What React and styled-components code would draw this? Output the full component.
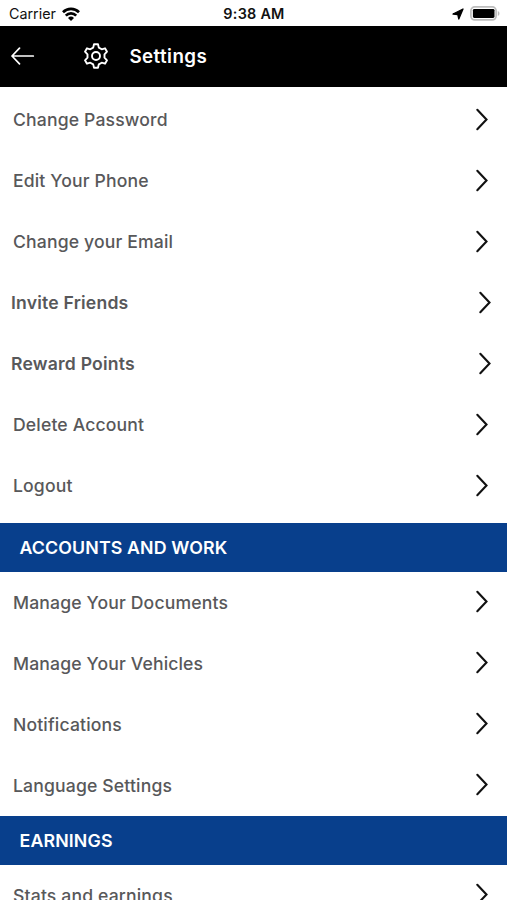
import React from 'react';
import styled, { createGlobalStyle } from 'styled-components';

const colors = {
  text: '#58585a',
  section: '#083f8c',
};

const GlobalStyle = createGlobalStyle`
  * {
    box-sizing: border-box;
  }

  body {
    margin: 0;
    overflow: hidden;
    background: white;
    font-family: Inter, "Liberation Sans", sans-serif;
  }
`;

const Screen = styled.div`
  display: flex;
  flex-direction: column;
  height: 900px;
  overflow: hidden;
`;

const StatusBar = styled.div`
  display: grid;
  grid-template-columns: 1fr auto 1fr;
  align-items: center;
  flex: none;
  height: 25.6px;
  padding: 1.6px 7px 0 9px;
  color: #111;
`;

const Carrier = styled.div`
  display: flex;
  align-items: center;
  gap: 6px;
  font-size: 14.3px;
`;

const Clock = styled.div`
  margin-right: 1px;
  font-size: 14.4px;
  font-weight: 600;
  letter-spacing: 0.25px;
`;

const StatusIcons = styled.div`
  display: flex;
  align-items: center;
  justify-content: flex-end;
  gap: 6px;
`;

const Header = styled.header`
  display: flex;
  align-items: center;
  flex: none;
  height: 61px;
  padding-left: 11px;
  background: black;
  color: white;
`;

const Title = styled.h1`
  margin: 0 0 0 20.5px;
  font-size: 18.8px;
  font-weight: 580;
  letter-spacing: 0.4px;
`;

const GearIcon = styled.svg`
  margin-left: 48px;
`;

const List = styled.div`
  flex: none;
  padding: ${props => (props.$first ? '2.4px 0 6.4px' : '0')};
`;

const Row = styled.div`
  display: flex;
  align-items: center;
  justify-content: space-between;
  height: 61.05px;
  padding: ${props => (props.$wide ? '0 16.5px 0 11px' : '0 19px 0 13px')};
  color: ${colors.text};
`;

const Label = styled.span`
  font-size: 17.6px;
  font-weight: ${props => (props.$wide ? 560 : 500)};
  letter-spacing: ${props => (props.$wide ? '0.2px' : '0.15px')};
  white-space: nowrap;
`;

const SectionTitle = styled.h2`
  display: flex;
  align-items: center;
  flex: none;
  height: 49px;
  margin: 0;
  padding-left: 19.5px;
  background: ${colors.section};
  color: white;
  font-size: 17.8px;
  font-weight: 560;
  letter-spacing: 0.12px;
`;

const account = [
  { label: 'Change Password' },
  { label: 'Edit Your Phone' },
  { label: 'Change your Email' },
  { label: 'Invite Friends', wide: true },
  { label: 'Reward Points', wide: true },
  { label: 'Delete Account' },
  { label: 'Logout' },
];

const work = [
  { label: 'Manage Your Documents' },
  { label: 'Manage Your Vehicles' },
  { label: 'Notifications' },
  { label: 'Language Settings' },
];

const earnings = [{ label: 'Stats and earnings' }];

const Wifi = () => (
  <svg width="18" height="14" viewBox="0 0 18 14" fill="none" stroke="black" strokeWidth="2.7">
    <path d="M1 5.2a11.4 11.4 0 0 1 16 0" />
    <path d="M3.8 8.6a7.3 7.3 0 0 1 10.4 0" />
    <path d="M9 13.9 6 10.9a4.3 4.3 0 0 1 6 0z" fill="black" stroke="none" />
  </svg>
);

const Location = () => (
  <svg width="12" height="12" viewBox="0 0 12 12">
    <path d="M11 1 6.8 11 5.8 6.7 1 6z" fill="black" stroke="black" strokeWidth="1.3" strokeLinejoin="round" />
  </svg>
);

const Battery = () => (
  <svg width="30" height="15" viewBox="0 0 30 15">
    <rect x="0.9" y="0.9" width="25.2" height="13" rx="3.8" fill="white" stroke="#bdbdbd" strokeWidth="1.7" />
    <rect x="2.9" y="2.9" width="21.6" height="9" rx="1.4" fill="black" />
    <path d="M27.8 5v5c2.2-.8 2.2-4.2 0-5z" fill="#bdbdbd" />
  </svg>
);

const Back = () => (
  <svg width="24" height="20" viewBox="0 0 24 20" fill="none" stroke="white" strokeWidth="1.7" strokeLinecap="round" strokeLinejoin="round">
    <path d="M22.3 10H1M8.5 2.2 1 10l7.5 7.8" />
  </svg>
);

const Gear = () => (
  <GearIcon width="26" height="28" viewBox="0 0 26 28" fill="none" stroke="white" strokeWidth="1.9" strokeLinejoin="round">
    <path d="M11 2.3h4l.8 3.3 2.9 1.7 3.3-1 2 3.4-2.5 2.6v3.4l2.5 2.6-2 3.4-3.3-1-2.9 1.7-.8 3.3h-4l-.8-3.3-2.9-1.7-3.3 1-2-3.4 2.5-2.6v-3.4L2 9.7l2-3.4 3.3 1 2.900-1.700z" />
    <circle cx="13" cy="14" r="4" />
  </GearIcon>
);

const Chevron = () => (
  <svg width="14" height="24" viewBox="0 0 14 24" fill="none" stroke="#111" strokeWidth="2.1" strokeLinecap="round">
    <path d="M3.3 1.800l9.200 9.700L3.300 21.200" />
  </svg>
);

const Rows = ({ items, first }) => (
  <List $first={first}>
    {items.map(({ label, wide }) => (
      <Row key={label} $wide={wide}>
        <Label $wide={wide}>{label}</Label>
        <Chevron />
      </Row>
    ))}
  </List>
);

const App = () => (
  <Screen>
    <GlobalStyle />
    <StatusBar>
      <Carrier>
        Carrier
        <Wifi />
      </Carrier>
      <Clock>9:38 AM</Clock>
      <StatusIcons>
        <Location />
        <Battery />
      </StatusIcons>
    </StatusBar>
    <Header>
      <Back />
      <Gear />
      <Title>Settings</Title>
    </Header>
    <Rows items={account} first />
    <SectionTitle>ACCOUNTS AND WORK</SectionTitle>
    <Rows items={work} />
    <SectionTitle>EARNINGS</SectionTitle>
    <Rows items={earnings} />
  </Screen>
);

export default App;
